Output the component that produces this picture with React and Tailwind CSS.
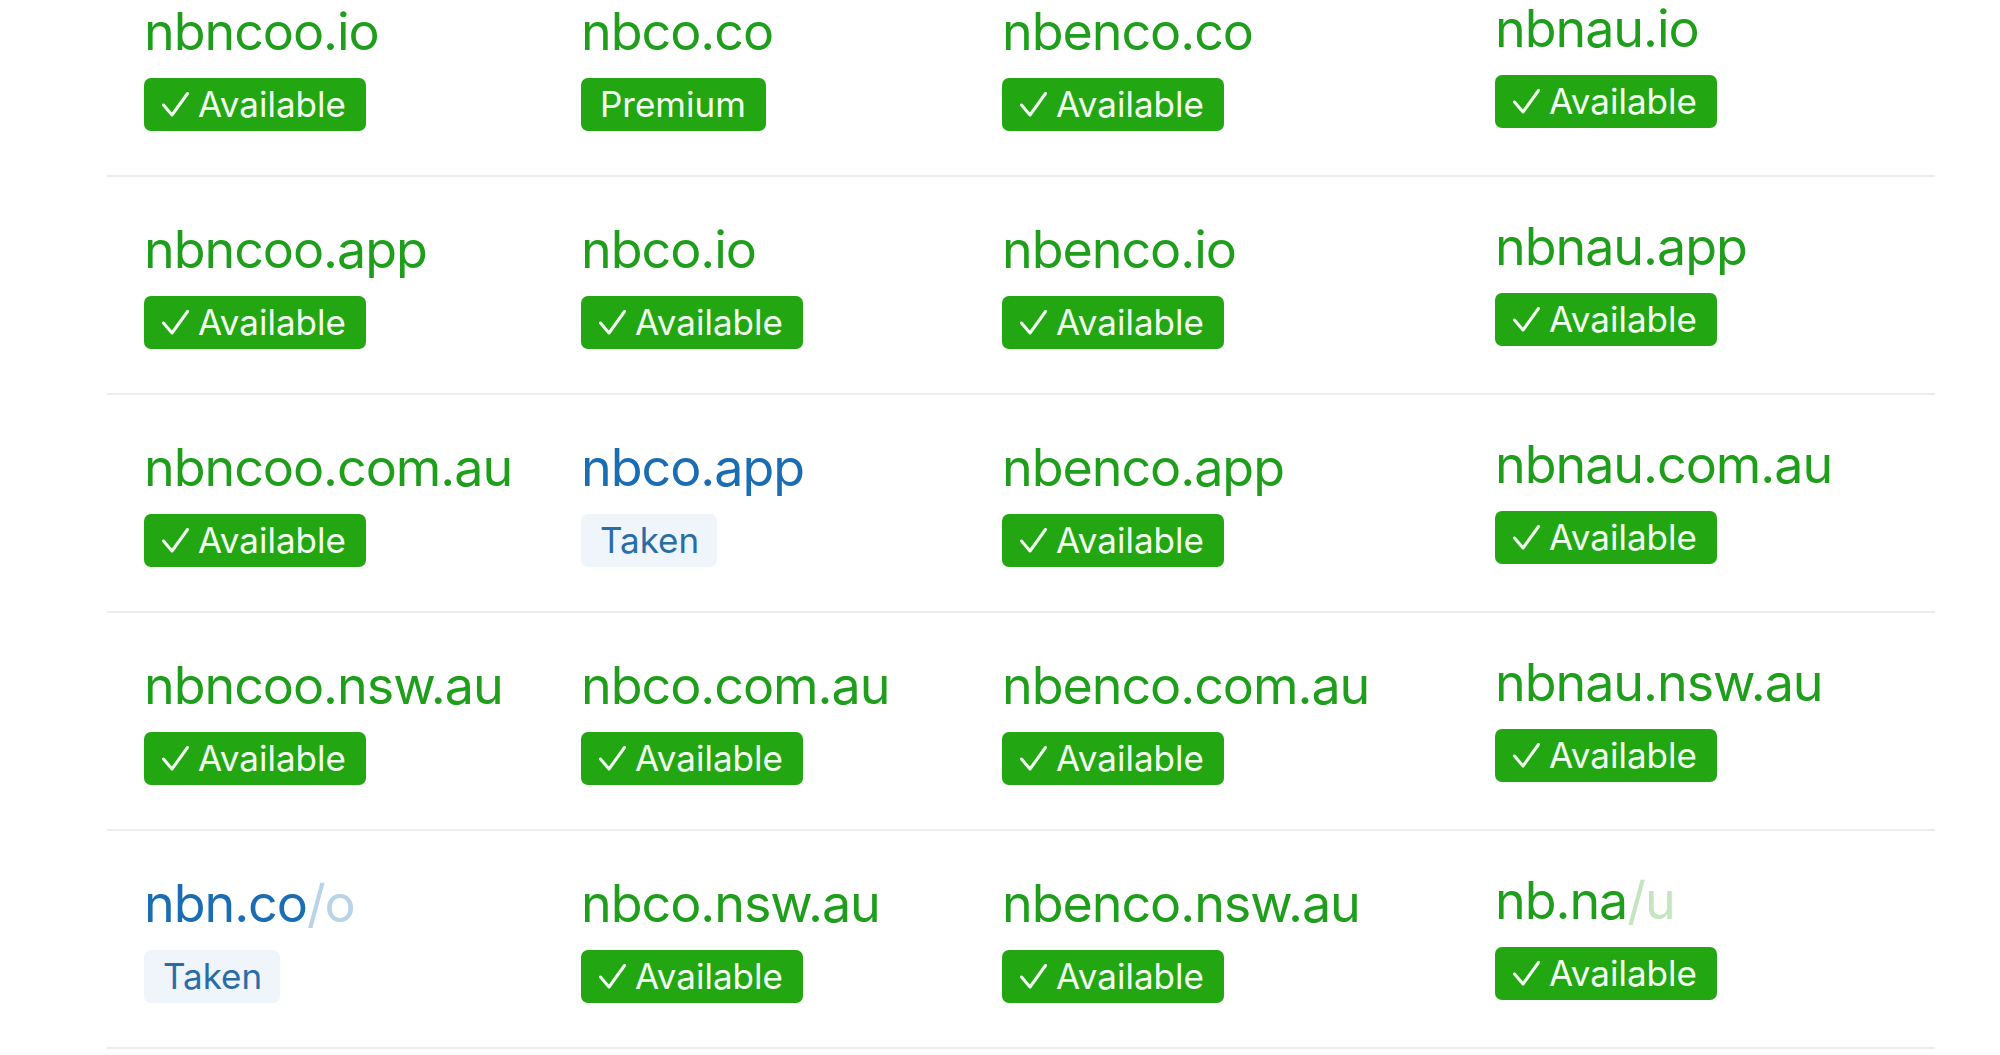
import React from "react";

const rows = [
  [
    { name: "nbncoo.io", status: "a" },
    { name: "nbco.co", status: "p" },
    { name: "nbenco.co", status: "a" },
    { name: "nbnau.io", status: "a" },
  ],
  [
    { name: "nbncoo.app", status: "a" },
    { name: "nbco.io", status: "a" },
    { name: "nbenco.io", status: "a" },
    { name: "nbnau.app", status: "a" },
  ],
  [
    { name: "nbncoo.com.au", status: "a" },
    { name: "nbco.app", status: "t" },
    { name: "nbenco.app", status: "a" },
    { name: "nbnau.com.au", status: "a" },
  ],
  [
    { name: "nbncoo.nsw.au", status: "a" },
    { name: "nbco.com.au", status: "a" },
    { name: "nbenco.com.au", status: "a" },
    { name: "nbnau.nsw.au", status: "a" },
  ],
  [
    { name: "nbn.co", suffix: "/o", status: "t" },
    { name: "nbco.nsw.au", status: "a" },
    { name: "nbenco.nsw.au", status: "a" },
    { name: "nb.na", suffix: "/u", status: "a" },
  ],
];

function Check() {
  return (
    <svg width="27" height="25" viewBox="0 0 27 25" fill="none" className="mr-[9px] shrink-0">
      <polyline
        points="1.5,13 10,23 25.5,1.5"
        stroke="#f2fff0"
        strokeWidth="3"
        strokeLinecap="round"
        strokeLinejoin="round"
      />
    </svg>
  );
}

function Badge({ status }) {
  if (status === "t") {
    return (
      <div className="flex h-[53px] items-center self-start rounded-[7px] bg-[#eff5fa] pl-[19px] pr-[18px] text-[35px] leading-none text-[#2a6da6]">
        Taken
      </div>
    );
  }
  if (status === "p") {
    return (
      <div className="flex h-[53px] items-center self-start rounded-[7px] bg-[#22a712] pl-[19px] pr-[20px] text-[35px] leading-none text-[#f2fff0]">
        Premium
      </div>
    );
  }
  return (
    <div className="flex h-[53px] items-center self-start rounded-[7px] bg-[#22a712] pl-[18px] pr-[20px] text-[35px] leading-none text-[#f2fff0]">
      <Check />
      Available
    </div>
  );
}

function Cell({ d, last }) {
  const taken = d.status === "t";
  return (
    <div
      className={
        "flex h-[218px] flex-col border-b-2 border-[#ececec] pl-[37px] " +
        (last ? "pt-[44px]" : "pt-[47px]")
      }
    >
      <div
        className={
          "text-[52px] leading-none tracking-[-0.02em] whitespace-nowrap " +
          (taken ? "text-[#1a6db2]" : "text-[#1f9e1c]")
        }
      >
        {d.name}
        {d.suffix ? (
          <span className={taken ? "text-[#b9d3e8]" : "text-[#c4e6bf]"}>{d.suffix}</span>
        ) : null}
      </div>
      <div className="mt-[20px] flex">
        <Badge status={d.status} />
      </div>
    </div>
  );
}

export default function App() {
  return (
    <div
      className="h-[1055px] w-[2000px] overflow-hidden bg-white"
      style={{ fontFamily: "Inter, 'Noto Sans', sans-serif" }}
    >
      <div className="ml-[107px] mt-[-41px] grid w-[1828px] grid-cols-[437px_421px_493px_477px]">
        {rows.map((r, i) =>
          r.map((d, j) => <Cell key={i + "-" + j} d={d} last={j === 3} />)
        )}
      </div>
    </div>
  );
}
